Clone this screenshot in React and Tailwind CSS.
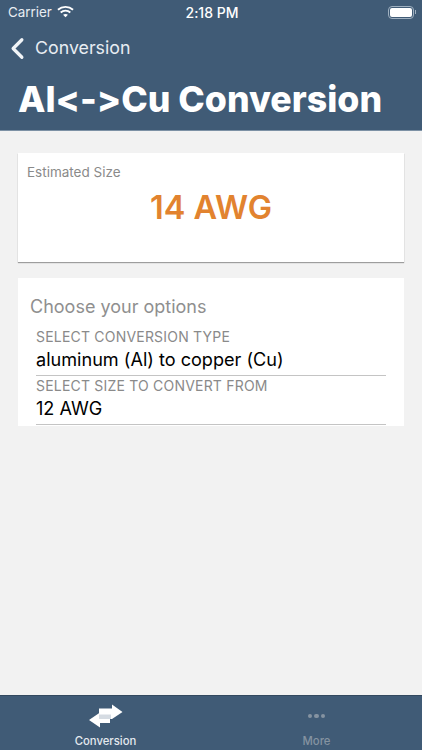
import { ChevronLeft } from "lucide-react";

function Wifi() {
  return (
    <svg width="17" height="13" viewBox="0 0 18 13" fill="none" stroke="white" strokeWidth="2">
      <path d="M1 4.6C5.5 .6 12.5 .6 17 4.6" />
      <path d="M3.9 7.5C6.8 5 11.2 5 14.1 7.5" />
      <path d="M9 12.6L6.4 10C7.9 8.8 10.1 8.8 11.6 10L9 12.6Z" fill="white" stroke="none" />
    </svg>
  );
}

function SwapIcon() {
  return (
    <svg width="36" height="24" viewBox="0 0 36 24">
      <path d="M11 4.5H24V0.5L34.5 8L24 15H11Z" fill="white" />
      <path d="M12 10.5H22V19H12V23.5L1 16L12 8.5Z" fill="white" />
      <path d="M11 10.5H23V15H11Z" fill="#d5dbe2" />
    </svg>
  );
}

function Field({ label, value }) {
  return (
    <div className="h-[49px] border-b border-[#c4c4c4]">
      <div className="text-[14px] leading-[19px] tracking-[0.2px] text-[#8a8a8a]">{label}</div>
      <div className="text-[18.1px] leading-[27px] text-black">{value}</div>
    </div>
  );
}

export default function App() {
  return (
    <div className="flex h-[750px] w-[422px] flex-col overflow-hidden bg-[#f2f2f2] font-['Inter',sans-serif] [font-variant-ligatures:none] [font-feature-settings:'calt'_0]">
      <header className="h-[131px] shrink-0 border-b border-[#7d91a5] bg-[#405b76] text-white">
        <div className="grid h-[24px] grid-cols-3 items-center pl-2 pr-[6px] text-[14px]">
          <div className="flex items-center gap-[5px] text-[#e8edf2]">
            <span className="text-[13.4px]">Carrier</span>
            <Wifi />
          </div>
          <span className="text-center font-medium">2:18 PM</span>
          <div className="flex items-center justify-end">
            <div className="h-[13px] w-[26px] rounded-[4px] border border-[#9fb0c0] p-[1px]">
              <div className="h-full w-full rounded-[2px] bg-white" />
            </div>
            <div className="ml-[1px] h-[4px] w-[1px] bg-[#9fb0c0]" />
          </div>
        </div>
        <div className="flex h-[48px] items-center">
          <ChevronLeft size={35} strokeWidth={2.2} className="text-[#f1f4f7]" />
          <span className="text-[17.8px] text-[#e8edf2]">Conversion</span>
        </div>
        <h1 className="pl-[18px] pt-[7px] text-[35.7px] font-extrabold leading-[40px]">{"Al<->Cu Conversion"}</h1>
      </header>

      <main className="flex-1 px-[18px] pt-[22px]">
        <section className="h-[109px] bg-white pl-[9px] pt-[11px] shadow-[0_1px_1px_rgba(0,0,0,0.35)]">
          <div className="text-[13.5px] leading-[16px] text-[#8a8a8a]">Estimated Size</div>
          <div className="mt-[8px] pr-[9px] text-center text-[32.5px] font-semibold leading-[40px] text-[#e2832f]">14 AWG</div>
        </section>

        <section className="mt-[16px] h-[148px] bg-white pl-[12px] pr-[18px] pt-[17px]">
          <div className="text-[18px] leading-[24px] text-[#8f8f8f]">Choose your options</div>
          <div className="mt-[8px] flex flex-col pl-[6px]">
            <Field label="SELECT CONVERSION TYPE" value="aluminum (Al) to copper (Cu)" />
            <Field label="SELECT SIZE TO CONVERT FROM" value="12 AWG" />
          </div>
        </section>
      </main>

      <nav className="grid h-[55px] shrink-0 grid-cols-2 border-t border-[#33495f] bg-[#405b76]">
        <div className="flex flex-col items-center pt-[8px]">
          <SwapIcon />
          <span className="mt-[7px] text-[11.3px] font-medium leading-[13px] text-[#e4e9ee]">Conversion</span>
        </div>
        <div className="flex flex-col items-center pt-[8px]">
          <div className="flex h-[24px] items-center gap-[2px]">
            <span className="size-[4.5px] rounded-full bg-[#8593a1]" />
            <span className="size-[4.5px] rounded-full bg-[#8593a1]" />
            <span className="size-[4.5px] rounded-full bg-[#8593a1]" />
          </div>
          <span className="mt-[7px] text-[11.3px] font-medium leading-[13px] text-[#8593a1]">More</span>
        </div>
      </nav>
    </div>
  );
}
